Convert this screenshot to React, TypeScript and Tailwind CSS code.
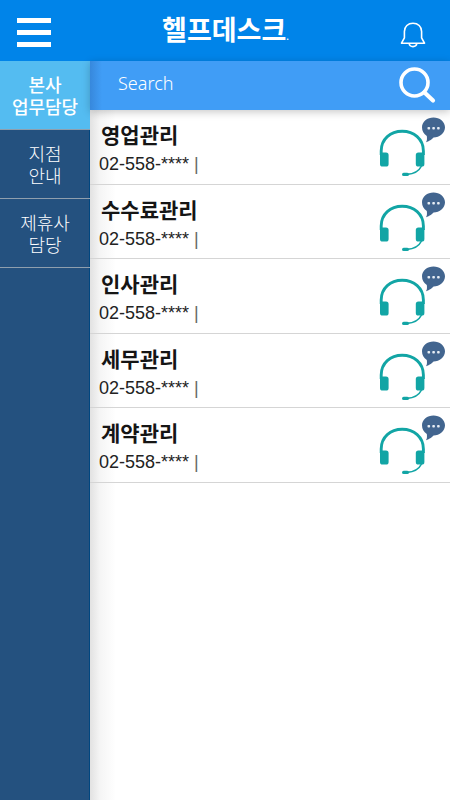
import React, { useState } from "react";

const korean = "font-['Noto_Sans_CJK_KR',sans-serif]";

const departments = ["영업관리", "수수료관리", "인사관리", "세무관리", "계약관리"];

const tabs = [
  { id: "head", label: "본사\n업무담당" },
  { id: "branch", label: "지점\n안내" },
  { id: "partner", label: "제휴사\n담당" },
];

function BellIcon() {
  return (
    <svg width="26" height="26" viewBox="0 0 26 26" fill="none" stroke="white" strokeWidth="1.6" strokeLinejoin="round" aria-hidden="true">
      <path d="M1.5 21.2H24.5L21.6 15.8V9.5C21.6 4.5 18 1.2 13 1.2S4.4 4.5 4.4 9.5V15.8Z" />
      <path d="M9.2 21.5C9.4 23.6 11 24.6 13 24.6S16.6 23.6 16.8 21.5" />
    </svg>
  );
}

function SearchIcon() {
  return (
    <svg width="37" height="37" viewBox="0 0 37 37" fill="none" stroke="white" aria-hidden="true">
      <circle cx="15.5" cy="15.5" r="13.5" strokeWidth="3.6" />
      <path d="M25.5 25.5L34 33.5" strokeWidth="4.2" strokeLinecap="round" />
    </svg>
  );
}

function HeadsetIcon() {
  return (
    <svg width="70" height="62" viewBox="0 0 70 62" fill="none" aria-hidden="true">
      <path d="M5.2 38V34C5.2 22 14.5 14.3 26.2 14.3S47.4 22 47.4 34V38" stroke="#12a5a5" strokeWidth="2.9" />
      <rect x="4" y="35.5" width="8.6" height="14" rx="2.6" fill="#12a5a5" />
      <rect x="39.8" y="35.5" width="8.6" height="14" rx="2.6" fill="#12a5a5" />
      <path d="M45.5 49C43 54 38 57 31 57.4" stroke="#12a5a5" strokeWidth="1.6" />
      <rect x="26" y="55.7" width="7" height="3.4" rx="1.7" fill="#12a5a5" />
      <path d="M57.5 0.5C63.7 0.5 69 4.7 69 10.3S63.7 20.6 57.5 20.6C56.7 21.7 53.5 24.3 50 25.3C51.3 23.4 51 20.7 50.8 18.9C47.8 17.1 46 14.1 46 10.3C46 4.7 51.2 0.5 57.5 0.5Z" fill="#42658f" />
      <g fill="#e8eef5">
        <rect x="51.5" y="10" width="2.6" height="2.6" rx="0.8" />
        <rect x="56.3" y="10" width="2.6" height="2.6" rx="0.8" />
        <rect x="61.1" y="10" width="2.6" height="2.6" rx="0.8" />
      </g>
    </svg>
  );
}

export default function App() {
  const [active, setActive] = useState("head");

  return (
    <div className={`flex min-h-screen flex-col bg-white ${korean}`}>
      <header className="flex h-[61px] items-center justify-between bg-[#0084e9] pl-[17px] pr-6">
        <button type="button" aria-label="Menu" className="flex w-[34px] flex-col gap-[7px] pt-[3px]">
          <span className="h-[5px] w-full bg-white" />
          <span className="h-[5px] w-full bg-white" />
          <span className="h-[5px] w-full bg-white" />
        </button>
        <h1 className="pt-1 text-[27px] font-bold leading-10 text-white">
          헬프데스크<span className="text-[8px]">.</span>
        </h1>
        <button type="button" aria-label="Notifications" className="pt-2">
          <BellIcon />
        </button>
      </header>

      <div className="flex flex-1">
        <nav className="w-[90px] shrink-0 border-r border-[#00467f] bg-[#24517f]">
          {tabs.map((tab) => (
            <button
              key={tab.id}
              type="button"
              onClick={() => setActive(tab.id)}
              className={`block h-[69px] w-[90px] whitespace-pre-line border-b border-[#8f9fae] text-center text-lg leading-[22px] text-white ${
                tab.id === active ? "bg-[#54bcf1] font-medium" : "font-light"
              }`}
            >
              {tab.label}
            </button>
          ))}
        </nav>

        <main className="min-w-0 flex-1 bg-[linear-gradient(to_right,#e2e2e2,#f5f5f5_10px,#ffffff_26px)]">
          <form
            onSubmit={(e) => e.preventDefault()}
            className="flex h-[49px] items-center justify-between bg-[linear-gradient(to_right,#3788dc,#409df6_12px)] pl-7 pr-[14px] shadow-[0_2px_8px_rgba(0,0,0,0.22)]"
          >
            <input
              type="text"
              aria-label="Search"
              placeholder="Search"
              className="mb-1.5 min-w-0 flex-1 bg-transparent font-['Noto_Sans',sans-serif] text-lg font-light text-white outline-none placeholder:text-white"
            />
            <button type="submit" aria-label="Search">
              <SearchIcon />
            </button>
          </form>

          <ul className="grid h-[373px] grid-rows-5">
            {departments.map((name) => (
              <li key={name} className="flex justify-between border-b border-[#d5d5d5] pl-[9px] pr-1 pt-[7px]">
                <div>
                  <h2 className="pb-0.5 pl-0.5 text-[21px] font-bold leading-[34px] text-[#151515]">{name}</h2>
                  <p className="font-['Liberation_Sans',sans-serif] text-lg leading-[22px] text-[#222222]">
                    02-558-**** <span className="text-[#666666]">|</span>
                  </p>
                </div>
                <button type="button" aria-label={`${name} 상담`} className="self-start">
                  <HeadsetIcon />
                </button>
              </li>
            ))}
          </ul>
        </main>
      </div>
    </div>
  );
}
